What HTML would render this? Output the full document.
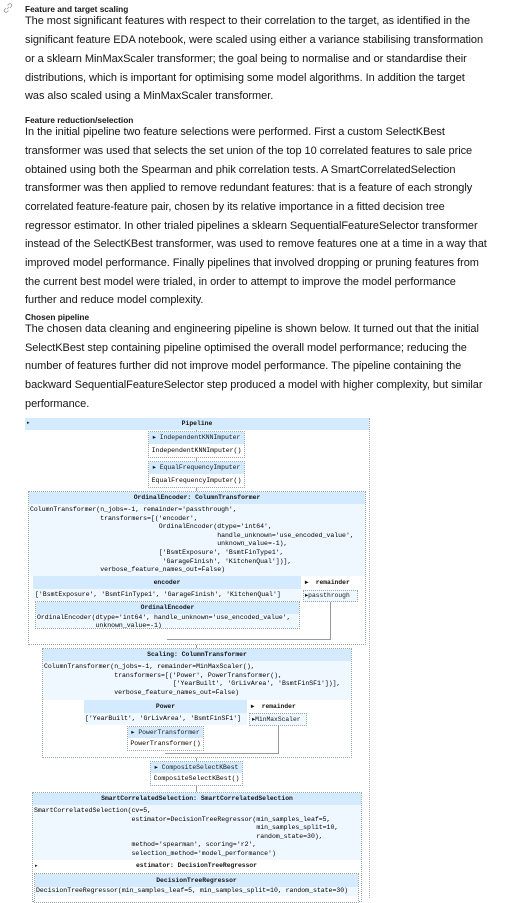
<!DOCTYPE html>
<html><head><meta charset="utf-8"><style>
*{margin:0;padding:0;box-sizing:border-box}
body{width:507px;height:895px;overflow:hidden;background:#fff;position:relative;font-family:"Liberation Sans",sans-serif;color:#161616}
.h{position:absolute;left:25px;font-size:8.3px;font-weight:bold;white-space:nowrap}
.l{position:absolute;left:25px;font-size:11px;white-space:nowrap;letter-spacing:-0.05px}
.a{position:absolute}
.m{font-family:"Liberation Mono",monospace;font-size:6.5px;color:#000;white-space:pre;line-height:8.6px}
.hd{background:#d4ebff;text-align:center;font-family:"Liberation Mono",monospace;font-size:6.4px;font-weight:bold;line-height:13px;white-space:nowrap}
.bd{background:#f0f8ff}
.dot{border:1px dotted #9aa}
.ln{position:absolute;background:#999}
.sm{font-family:"Liberation Mono",monospace;font-size:6.3px;white-space:pre}
</style></head><body>
<svg class="a" style="left:2px;top:2px" width="12" height="12" viewBox="0 0 12 12"><path d="M5 7l2-2M4 6L2.5 7.5a1.8 1.8 0 002.5 2.5L6.5 8.5M8 6l1.5-1.5A1.8 1.8 0 007 2L5.5 3.5" stroke="#999" stroke-width="0.8" fill="none"/></svg>
<div class="h" style="top:4px">Feature and target scaling</div>
<div class="l" style="top:15px">The most significant features with respect to their correlation to the target, as identified in the</div>
<div class="l" style="top:34px">significant feature EDA notebook, were scaled using either a variance stabilising transformation</div>
<div class="l" style="top:53px">or a sklearn MinMaxScaler transformer; the goal being to normalise and or standardise their</div>
<div class="l" style="top:72px">distributions, which is important for optimising some model algorithms. In addition the target</div>
<div class="l" style="top:90px">was also scaled using a MinMaxScaler transformer.</div>
<div class="h" style="top:115px">Feature reduction/selection</div>
<div class="l" style="top:126px">In the initial pipeline two feature selections were performed. First a custom SelectKBest</div>
<div class="l" style="top:145px">transformer was used that selects the set union of the top 10 correlated features to sale price</div>
<div class="l" style="top:164px">obtained using both the Spearman and phik correlation tests. A SmartCorrelatedSelection</div>
<div class="l" style="top:182px">transformer was then applied to remove redundant features: that is a feature of each strongly</div>
<div class="l" style="top:201px">correlated feature-feature pair, chosen by its relative importance in a fitted decision tree</div>
<div class="l" style="top:220px">regressor estimator. In other trialed pipelines a sklearn SequentialFeatureSelector transformer</div>
<div class="l" style="top:238px">instead of the SelectKBest transformer, was used to remove features one at a time in a way that</div>
<div class="l" style="top:257px">improved model performance. Finally pipelines that involved dropping or pruning features from</div>
<div class="l" style="top:276px">the current best model were trialed, in order to attempt to improve the model performance</div>
<div class="l" style="top:294px">further and reduce model complexity.</div>
<div class="h" style="top:312px">Chosen pipeline</div>
<div class="l" style="top:323px">The chosen data cleaning and engineering pipeline is shown below. It turned out that the initial</div>
<div class="l" style="top:342px">SelectKBest step containing pipeline optimised the overall model performance; reducing the</div>
<div class="l" style="top:360px">number of features further did not improve model performance. The pipeline containing the</div>
<div class="l" style="top:379px">backward SequentialFeatureSelector step produced a model with higher complexity, but similar</div>
<div class="l" style="top:398px">performance.</div>

<!-- diagram -->
<div class="a" style="left:25px;top:418px;width:345px;height:480px;border-right:1px dotted #aaa"></div>
<div class="a hd" style="left:25px;top:418px;width:344px;height:12px;line-height:12px">Pipeline</div>
<div class="a sm" style="left:27px;top:420px;font-size:5px">▸</div>
<div class="ln" style="left:196px;top:430px;width:1px;height:362px"></div>

<div class="a dot bd" style="left:148px;top:431px;width:97px;height:27px"><div class="hd" style="font-weight:normal;line-height:12px;height:12px">▸ IndependentKNNImputer</div><div class="m" style="text-align:center;line-height:13px;background:#fff">IndependentKNNImputer()</div></div>
<div class="a dot bd" style="left:148px;top:461px;width:97px;height:27px"><div class="hd" style="font-weight:normal;line-height:12px;height:12px">▸ EqualFrequencyImputer</div><div class="m" style="text-align:center;line-height:13px;background:#fff">EqualFrequencyImputer()</div></div>

<div class="a dot" style="left:28px;top:491px;width:338px;height:154px;background:#fff"></div>
<div class="a hd" style="left:29px;top:492px;width:336px;height:12px;line-height:12px">OrdinalEncoder: ColumnTransformer</div>
<div class="a bd m" style="left:29px;top:504px;width:336px;height:72px;padding:2px 1px;overflow:hidden">ColumnTransformer(n_jobs=-1, remainder='passthrough',
                  transformers=[('encoder',
                                 OrdinalEncoder(dtype='int64',
                                                handle_unknown='use_encoded_value',
                                                unknown_value=-1),
                                 ['BsmtExposure', 'BsmtFinType1',
                                  'GarageFinish', 'KitchenQual'])],
                  verbose_feature_names_out=False)</div>
<div class="a hd" style="left:33px;top:576px;width:268px;height:13px">encoder</div>
<div class="a bd m" style="left:33px;top:589px;width:268px;height:12px;line-height:12px;padding-left:2px">['BsmtExposure', 'BsmtFinType1', 'GarageFinish', 'KitchenQual']</div>
<div class="a sm" style="left:305px;top:579px;font-weight:bold">▸  remainder</div>
<div class="a dot bd sm" style="left:303px;top:590px;width:55px;height:12px;line-height:10px;padding-left:1px;overflow:hidden">▸passthrough</div>
<div class="ln" style="left:330px;top:602px;width:1px;height:38px"></div>
<div class="ln" style="left:167px;top:639px;width:164px;height:1px"></div>
<div class="a dot" style="left:35px;top:601px;width:265px;height:28px;background:#fff;overflow:hidden"><div class="hd" style="height:12px;line-height:12px">OrdinalEncoder</div><div class="m bd" style="padding-left:1px;line-height:8px;height:14px">OrdinalEncoder(dtype='int64', handle_unknown='use_encoded_value',
               unknown_value=-1)</div></div>

<div class="a dot" style="left:42px;top:648px;width:310px;height:110px;background:#fff"></div>
<div class="a hd" style="left:43px;top:649px;width:308px;height:12px;line-height:12px">Scaling: ColumnTransformer</div>
<div class="a bd m" style="left:43px;top:661px;width:308px;height:39px;padding:2px 1px;overflow:hidden">ColumnTransformer(n_jobs=-1, remainder=MinMaxScaler(),
                  transformers=[('Power', PowerTransformer(),
                                 ['YearBuilt', 'GrLivArea', 'BsmtFinSF1'])],
                  verbose_feature_names_out=False)</div>
<div class="a hd" style="left:84px;top:700px;width:163px;height:13px">Power</div>
<div class="a bd m" style="left:84px;top:713px;width:163px;height:12px;line-height:12px;padding-left:1px;overflow:hidden">['YearBuilt', 'GrLivArea', 'BsmtFinSF1']</div>
<div class="a sm" style="left:251px;top:703px;font-weight:bold">▸  remainder</div>
<div class="a dot bd sm" style="left:249px;top:713px;width:58px;height:13px;line-height:11px;padding-left:2px">▸MinMaxScaler</div>
<div class="ln" style="left:278px;top:726px;width:1px;height:28px"></div>
<div class="ln" style="left:165px;top:753px;width:114px;height:1px"></div>
<div class="a dot" style="left:127px;top:726px;width:77px;height:25px;background:#fff"><div class="hd" style="font-weight:normal;height:11px;line-height:11px">▸ PowerTransformer</div><div class="m" style="text-align:center;line-height:12px">PowerTransformer()</div></div>

<div class="a dot bd" style="left:150px;top:761px;width:93px;height:25px"><div class="hd" style="font-weight:normal;line-height:11px;height:11px">▸ CompositeSelectKBest</div><div class="m" style="text-align:center;line-height:12px;background:#fff">CompositeSelectKBest()</div></div>

<div class="a dot" style="left:32px;top:792px;width:330px;height:110px;background:#fff"></div>
<div class="a hd" style="left:33px;top:793px;width:328px;height:12px;line-height:12px">SmartCorrelatedSelection: SmartCorrelatedSelection</div>
<div class="a bd m" style="left:33px;top:805px;width:328px;height:55px;padding:2px 1px;overflow:hidden">SmartCorrelatedSelection(cv=5,
                         estimator=DecisionTreeRegressor(min_samples_leaf=5,
                                                         min_samples_split=10,
                                                         random_state=30),
                         method='spearman', scoring='r2',
                         selection_method='model_performance')</div>
<div class="a sm" style="left:35px;top:863px;font-size:5px">▸</div>
<div class="a sm" style="left:136px;top:862px;font-weight:bold">estimator: DecisionTreeRegressor</div>
<div class="a dot" style="left:34px;top:873px;width:325px;height:30px;background:#fff;overflow:hidden"><div class="hd" style="height:13px;line-height:13px">DecisionTreeRegressor</div><div class="m bd" style="padding-left:1px">DecisionTreeRegressor(min_samples_leaf=5, min_samples_split=10, random_state=30)</div></div>
</body></html>
